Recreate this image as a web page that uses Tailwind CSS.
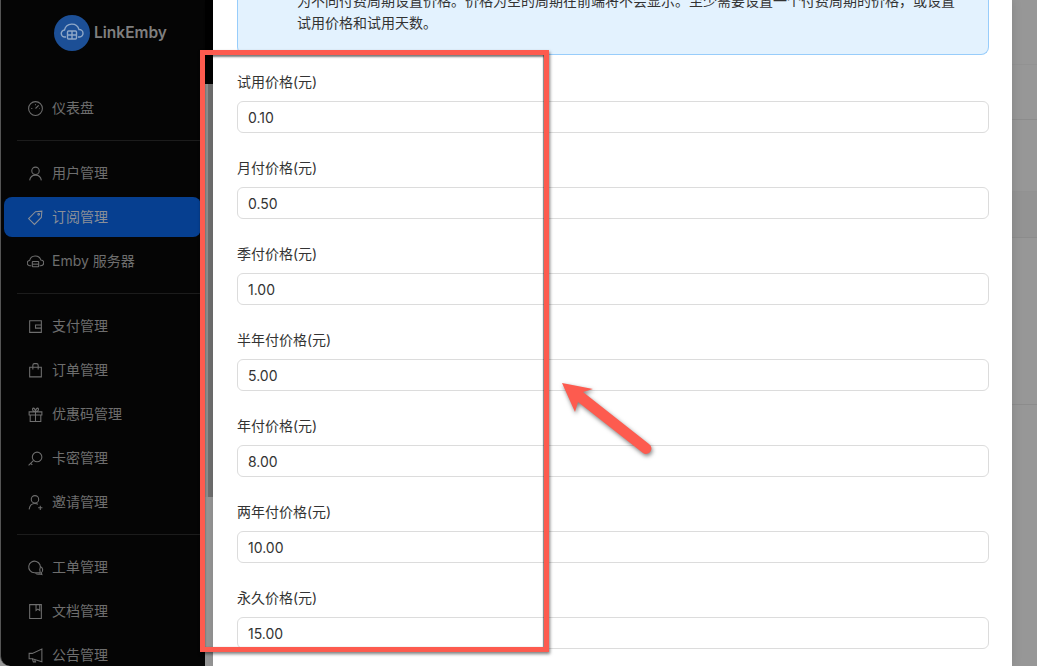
<!DOCTYPE html>
<html lang="zh" class="h-full">
<head>
    <meta charset="UTF-8">
    <title>LinkEmby</title>
    <script src="https://cdn.jsdelivr.net/npm/@tailwindcss/browser@4"></script>
</head>
<body class="relative w-[1037px] h-[666px] overflow-hidden bg-[#979797] font-['Inter','Noto_Sans_CJK_SC',sans-serif]">
    <div class="flex h-[666px]">
        <!-- sidebar -->
        <aside class="w-[205px] h-[666px] shrink-0 overflow-hidden bg-[#050505] border-l border-[#555] rounded-bl-[10px] text-[#6e6e6e] text-sm">
            <div class="flex items-center gap-1 h-[66px] pl-[53px]">
                <div class="flex items-center justify-center w-9 h-9 rounded-full bg-[#1c4f96]">
                    <svg class="w-6 h-6" viewBox="0 0 24 24" fill="none" stroke="#8fa8c8" stroke-width="1.4"><path d="M6 16H5a3.500 3.500 0 0 1-.5-7A7.500 7.500 0 0 1 19 8.500a3.500 3.500 0 0 1 .5 7.500H18"/><rect x="7.500" y="10" width="9" height="8" rx="1"/><path d="M7.500 14h9M12 10v8"/></svg>
                </div>
                <span class="text-[15.5px] font-semibold text-[#7f7f7f]">LinkEmby</span>
            </div>
            <nav class="pt-[22px]">
                <a class="flex items-center gap-2 h-10 pl-[26px]"><svg class="w-[17px] h-[17px]" viewBox="0 0 16 16" fill="none" stroke="currentColor"><circle cx="8" cy="8" r="6.500"/><path d="M8 8l3-3M4 8h1M8 4v1M11.500 8h.5"/></svg>仪表盘</a>
                <div class="h-px bg-[#1c1c1c] ml-4 mr-[5px] my-3"></div>
                <a class="flex items-center gap-2 h-10 pl-[26px]"><svg class="w-[17px] h-[17px]" viewBox="0 0 16 16" fill="none" stroke="currentColor"><circle cx="8" cy="5.500" r="3.500"/><path d="M2.500 14.500c.5-3.500 2.500-5 5.500-5s5 1.500 5.500 5"/></svg>用户管理</a>
                <a class="flex items-center gap-2 h-10 pl-[23px] ml-[3px] mr-[4px] mt-1 rounded-lg bg-[#063f90] text-[#8a8f98]"><svg class="w-[17px] h-[17px]" viewBox="0 0 16 16" fill="none" stroke="currentColor"><path d="M1.500 9L8 2.500l6-.5-.5 6L7 14.500z"/><circle cx="11" cy="5" r=".8"/></svg>订阅管理</a>
                <a class="flex items-center gap-2 h-10 pl-[26px] mt-1"><svg class="w-[17px] h-[17px]" viewBox="0 0 16 16" fill="none" stroke="currentColor"><path d="M4 12H3a2.500 2.500 0 0 1-.5-5A5.500 5.500 0 0 1 13 6.500a2.500 2.500 0 0 1 0 5.500h-1"/><rect x="5" y="8" width="6" height="5" rx=".5"/><path d="M5 10.500h6"/></svg>Emby 服务器</a>
                <div class="h-px bg-[#1c1c1c] ml-4 mr-[5px] my-3"></div>
                <a class="flex items-center gap-2 h-10 pl-[26px]"><svg class="w-[17px] h-[17px]" viewBox="0 0 16 16" fill="none" stroke="currentColor"><path d="M2.500 2.500h11v11h-11z"/><path d="M13.500 6.500H8v3h5.500"/></svg>支付管理</a>
                <a class="flex items-center gap-2 h-10 pl-[26px] mt-1"><svg class="w-[17px] h-[17px]" viewBox="0 0 16 16" fill="none" stroke="currentColor"><path d="M2.500 5h11v9h-11z"/><path d="M5.500 7V3a1.500 1.500 0 0 1 1.500-1.500h2A1.500 1.500 0 0 1 10.500 3v4"/></svg>订单管理</a>
                <a class="flex items-center gap-2 h-10 pl-[26px] mt-1"><svg class="w-[17px] h-[17px]" viewBox="0 0 16 16" fill="none" stroke="currentColor"><path d="M2 5.500h12v3H2zM3 8.500v6h10v-6M8 5.500v9M8 5.500C5 5.500 4.500 2 6 2s2 3.500 2 3.500S8.500 2 10 2s1 3.500-2 3.500"/></svg>优惠码管理</a>
                <a class="flex items-center gap-2 h-10 pl-[26px] mt-1"><svg class="w-[17px] h-[17px]" viewBox="0 0 16 16" fill="none" stroke="currentColor"><circle cx="9.500" cy="6.500" r="4.500"/><path d="M6 10l-4.500 4.500M3.500 12.500l1.500 1.500"/></svg>卡密管理</a>
                <a class="flex items-center gap-2 h-10 pl-[26px] mt-1"><svg class="w-[17px] h-[17px]" viewBox="0 0 16 16" fill="none" stroke="currentColor"><circle cx="7.500" cy="5" r="3.500"/><path d="M2 14.500c.5-3.500 2.500-5.500 5.500-5.500 1 0 2 .2 2.800.7M12.500 11v4M10.500 13h4"/></svg>邀请管理</a>
                <div class="h-px bg-[#1c1c1c] ml-4 mr-[5px] my-3"></div>
                <a class="flex items-center gap-2 h-10 pl-[26px]"><svg class="w-[17px] h-[17px]" viewBox="0 0 16 16" fill="none" stroke="currentColor"><path d="M7 13a5.500 5.500 0 1 1 5-3l.5 3z"/><path d="M12.500 7a3.500 3.500 0 0 1 1 6l.5 1.500-2-.5a5 5 0 0 1-4-.5"/><path d="M4.500 7.500h.01M7 7.500h.01M9.500 7.500h.01"/></svg>工单管理</a>
                <a class="flex items-center gap-2 h-10 pl-[26px] mt-1"><svg class="w-[17px] h-[17px]" viewBox="0 0 16 16" fill="none" stroke="currentColor"><path d="M2.500 1.500h11v13h-11z"/><path d="M8.500 1.500v5.500l1.700-1.200 1.800 1.200V1.500"/></svg>文档管理</a>
                <a class="flex items-center gap-2 h-10 pl-[26px] mt-1"><svg class="w-[17px] h-[17px]" viewBox="0 0 16 16" fill="none" stroke="currentColor"><path d="M14 2v12L5 11H2V6h3z"/><path d="M5 11l1 3h2l-.7-2"/></svg>公告管理</a>
            </nav>
        </aside>

        <!-- strip between sidebar and dialog -->
        <div class="w-2 shrink-0 flex flex-col">
            <div class="h-[84px] bg-black"></div>
            <div class="h-[413px] flex">
                <div class="w-[3px] bg-[#8f8f8f] rounded-tl-[3px]"></div>
                <div class="flex-1 bg-[#707070]"></div>
            </div>
            <div class="flex-1 bg-[#979797]"></div>
        </div>

        <!-- dialog -->
        <main class="relative w-[799px] h-[666px] shrink-0 overflow-hidden bg-white pl-6 pr-[23px] text-sm text-[#333] shadow-[0_0_10px_rgba(0,0,0,0.12)]">
            <div class="flow-root h-[55px] rounded-b-lg border border-t-0 border-[#98cdfb] bg-[#e3f2fe] pl-[59px] leading-[22px]">
                <p class="mt-[-10px] whitespace-nowrap">为不同付费周期设置价格。价格为空的周期在前端将不会显示。至少需要设置一个付费周期的价格，或设置</p>
                <p>试用价格和试用天数。</p>
            </div>
            <div class="pt-[17px] flex flex-col gap-[25px]">
                <div><label class="block h-5 mb-[9px] leading-5">试用价格(元)</label><div class="flex items-center h-8 rounded-md border border-[#dcdcdc] pl-2.5 pt-px">0.10</div></div>
                <div><label class="block h-5 mb-[9px] leading-5">月付价格(元)</label><div class="flex items-center h-8 rounded-md border border-[#dcdcdc] pl-2.5 pt-px">0.50</div></div>
                <div><label class="block h-5 mb-[9px] leading-5">季付价格(元)</label><div class="flex items-center h-8 rounded-md border border-[#dcdcdc] pl-2.5 pt-px">1.00</div></div>
                <div><label class="block h-5 mb-[9px] leading-5">半年付价格(元)</label><div class="flex items-center h-8 rounded-md border border-[#dcdcdc] pl-2.5 pt-px">5.00</div></div>
                <div><label class="block h-5 mb-[9px] leading-5">年付价格(元)</label><div class="flex items-center h-8 rounded-md border border-[#dcdcdc] pl-2.5 pt-px">8.00</div></div>
                <div><label class="block h-5 mb-[9px] leading-5">两年付价格(元)</label><div class="flex items-center h-8 rounded-md border border-[#dcdcdc] pl-2.5 pt-px">10.00</div></div>
                <div><label class="block h-5 mb-[9px] leading-5">永久价格(元)</label><div class="flex items-center h-8 rounded-md border border-[#dcdcdc] pl-2.5 pt-px">15.00</div></div>
            </div>
        </main>

        <!-- dimmed page behind the dialog -->
        <div class="flex-1 flex flex-col">
            <div class="h-[65px] border-b border-[#929292]"></div>
            <div class="h-[55px] border-b border-[#8c8c8c]"></div>
            <div class="h-[72px] border-b border-[#929292]"></div>
            <div class="h-[46px] border-b border-[#8c8c8c] bg-[#939393]"></div>
            <div class="h-[167px] border-b border-[#8c8c8c]"></div>
        </div>
    </div>

    <!-- annotation drawn over the screenshot -->
    <div class="absolute left-[200px] top-[50px] w-[349px] h-[602px] border-[5px] border-[#fd5b4f] shadow-[1px_2px_3px_rgba(0,0,0,0.5),inset_0_2px_2px_rgba(0,0,0,0.5),inset_-1px_0_1px_rgba(0,0,0,0.4)]"></div>
    <svg class="absolute left-[555px] top-[375px] drop-shadow-[1px_2px_2px_rgba(0,0,0,0.5)]" width="105" height="85" viewBox="0 0 105 85">
        <path d="M7 8L38 14 28 17 94 69A4.500 4.500 0 0 1 88 78L23 27 20 37z" fill="#fd5b4f"/>
    </svg>
</body>
</html>
